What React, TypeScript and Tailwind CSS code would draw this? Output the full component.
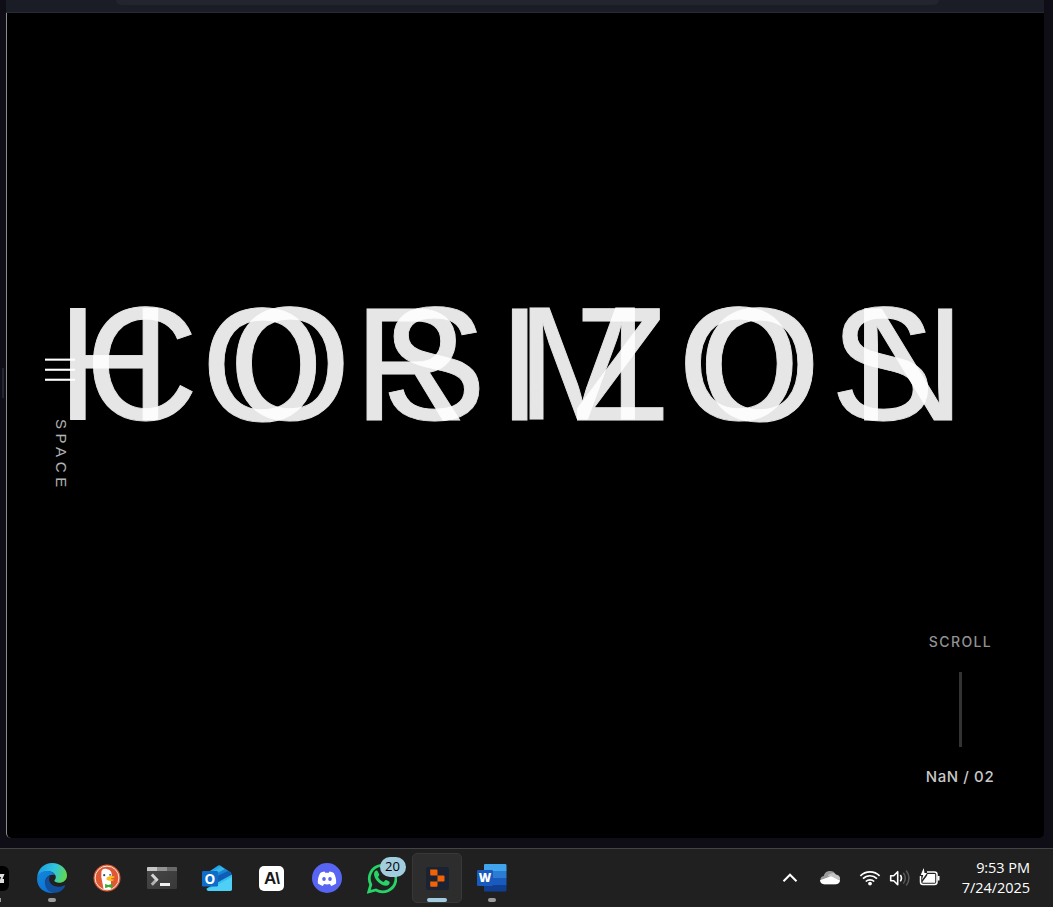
import React from "react";

function Edge() {
  return (
    <svg width="30" height="30" viewBox="0 0 30 30">
      <defs>
        <linearGradient id="eTop" x1="0" y1="0.3" x2="1" y2="0.5">
          <stop offset="0" stopColor="#1b9de2" />
          <stop offset="0.55" stopColor="#2fc4df" />
          <stop offset="1" stopColor="#62d84e" />
        </linearGradient>
        <linearGradient id="eLeft" x1="0" y1="0" x2="0.6" y2="1">
          <stop offset="0" stopColor="#1488dc" />
          <stop offset="1" stopColor="#0c6fd0" />
        </linearGradient>
      </defs>
      <path d="M0.2 14C1 5.5 7.5 0 15 0c8.500 0 15 6 15 12.500 0 4.500-3.500 7.300-8 7.300-2.700 0-4.600-.9-4.600-2.200 0-.8 1.400-1.400 1.400-3.400 0-3.300-3.200-6-8-6C6 8.200 2 10.300.2 14z" fill="url(#eTop)" />
      <path d="M0.100 15.500C.3 10.500 5 8 10.500 8c3.600 0 6.600 1.800 7.800 4.200C13.500 10.500 8.300 13.500 8.300 19c0 5 4 9.500 9.300 10.700C8.500 31.500-.4 25 .1 15.500z" fill="url(#eLeft)" />
      <path d="M13 12.600c-1.500 3-1.200 6.200 1.200 8.500 3.300 3.200 8.700 3.500 12.800 1.300.8-.4 1.300.2.900 1C25.500 27.800 20.800 30.400 16 29.700 10.700 29 7.500 24 8.300 19c.4-3 2-5.400 4.700-6.400z" fill="#114f9c" />
    </svg>
  );
}

function Duck() {
  return (
    <svg width="28" height="28" viewBox="0 0 28 28">
      <circle cx="14" cy="14" r="13.500" fill="#de5833" />
      <circle cx="14" cy="14" r="11.900" fill="none" stroke="#f7e9e4" strokeWidth="1" />
      <path d="M8.400 9C8 5.700 11 4.100 14 5.200c3.800.5 5.100 3.200 4.700 6.800l-.8 3 .2 9.800c-2.600 1-5.300.9-7.600-.1L8.300 13z" fill="#fff" />
      <path d="M14.500 12.900c2.400-1.200 5.700-1 7.400-.2.500.9-3.700 1.500-4.400 2 1.500.8 3.300.6 3.600 1-.8 1.800-6.300 1.500-7.500-.1-.5-1 .1-2.200.9-2.700z" fill="#fbbd16" />
      <path d="M12 20l3.300 1.100 4-1.400.3 4.600-4.100-1.200-3.300 1.200z" fill="#43a832" />
      <circle cx="11.200" cy="11.200" r="1.100" fill="#334b73" />
      <circle cx="17.100" cy="10.800" r=".9" fill="#334b73" />
    </svg>
  );
}

function Terminal() {
  return (
    <svg width="30" height="22" viewBox="0 0 30 22">
      <defs>
        <linearGradient id="term" x1="0" y1="0" x2="1" y2="1">
          <stop offset="0" stopColor="#484848" />
          <stop offset="1" stopColor="#383838" />
        </linearGradient>
      </defs>
      <rect width="30" height="22" rx="1.200" fill="url(#term)" />
      <path d="M1 0h9v4H0V1a1 1 0 011-1z" fill="#c6c6c6" />
      <path d="M10 0h10v4H10z" fill="#929292" />
      <path d="M20 0h9a1 1 0 011 1v3H20z" fill="#686868" />
      <path d="M10.300 12L4.800 17.800" stroke="#b2b2b2" strokeWidth="3" />
      <path d="M4.800 7.500L10.500 13.500" stroke="#d5d5d5" strokeWidth="3" />
      <path d="M13 16h10v3H13z" fill="#f1f1f1" />
    </svg>
  );
}

function Outlook() {
  return (
    <svg width="30" height="27" viewBox="0 0 30 27">
      <path d="M5 8L16.200.6q1-.7 2 0L29 7.800v3L5 20z" fill="#24a7e5" />
      <path d="M8 8l11-6 5 3L6 15z" fill="#38b6ec" />
      <path d="M8 12L23 3.900l5 3.300L9 18z" fill="#1686d3" />
      <path d="M5 16L26 6l3.500 2.200v4L10 22z" fill="#0f5db5" />
      <path d="M30 9.500v14a2.500 2.500 0 01-2.500 2.500H7q-2.500 0-2.500-2.500z" fill="#35bfee" />
      <path d="M12 21.500L30 12v11.500a2.500 2.500 0 01-2.500 2.500H7q-1.500 0-2-2z" fill="#4ecff5" />
      <rect x="0" y="6" width="16" height="15.500" rx="1.300" fill="#0f6cc9" />
      <text x="7.900" y="18.600" textAnchor="middle" fontSize="13.500" fontWeight="700" fontFamily="Open Sans, sans-serif" fill="#fff">O</text>
    </svg>
  );
}

function Discord() {
  return (
    <svg width="30" height="30" viewBox="0 0 30 30">
      <circle cx="15" cy="15" r="15" fill="#5865f2" />
      <path d="M12.500 8.500c-1.700.2-3.200.8-4.300 1.500-1.800 3.300-2.700 6.800-2.300 10.500 1.800 1.300 3.500 2 5 2.400l1.100-1.900c2 .5 4 .5 6 0l1.100 1.900c1.700-.4 3.300-1.200 5-2.400.4-3.600-.4-7.200-2.300-10.500-1.200-.8-2.700-1.300-4.300-1.500l-.7 1.200h-3.600z" fill="#fff" />
      <ellipse cx="12" cy="16" rx="1.800" ry="2" fill="#5865f2" />
      <ellipse cx="18" cy="16" rx="1.800" ry="2" fill="#5865f2" />
    </svg>
  );
}

function WhatsApp() {
  return (
    <svg width="30" height="31" viewBox="0 0 30 31">
      <path d="M1.700 28.900L3.800 21.600A13.300 13.300 0 1 1 8.900 27z" fill="none" stroke="#25d366" strokeWidth="2.800" />
      <path d="M10.800 8.400c-.4-.8-.8-.9-1.300-.9-1 0-2.500 1.200-2.500 3.500 0 5.500 7 11.800 12 11.800 2.300 0 3.900-1.700 3.700-3.600-.1-.7-2.900-2-3.700-2.200-1.100-.2-1.800 2.100-2.500 2.100-1.300-.2-5.200-3.600-5.400-5-.1-.7 1.200-1.500 1.200-2.400z" fill="#25d366" />
    </svg>
  );
}

function Word() {
  return (
    <svg width="30" height="28" viewBox="0 0 30 28">
      <path d="M8 0h20.500q1 0 1 1.500V7H7V1q0-1 1-1z" fill="#41a5ee" />
      <path d="M7 7h22.500v7H7z" fill="#2b7cd3" />
      <path d="M7 14h22.500v7H7z" fill="#185abd" />
      <path d="M7 21h22.500v5q0 1.500-1.500 1.500H8q-1 0-1-1z" fill="#103f91" />
      <rect x="0" y="6" width="16" height="16" rx="1.300" fill="#185abd" />
      <text x="7.900" y="18.200" textAnchor="middle" fontSize="12" fontWeight="800" fontFamily="Open Sans, sans-serif" fill="#fff">W</text>
    </svg>
  );
}

function Tray() {
  return (
    <div className="flex h-[58px] w-[160px] items-center">
      <svg width="160" height="30" viewBox="0 0 160 30" fill="none">
        <path d="M3.500 18.200L10 11.700l6.500 6.500" stroke="#fff" strokeWidth="2" />
        <path d="M44.500 21.300a4.200 4.200 0 01-.8-8.300 6.500 6.500 0 0112-1.600 5 5 0 014.300 5.100q.3 4.800-4.600 4.800z" fill="#9b9b9b" />
        <path d="M51 10.500q3.500-1.500 5 1.300 4.300.5 4 5l-9-2.300-3.300-1.700q1-1.600 3.300-2.300z" fill="#c4c4c4" />
        <path d="M44 21.300q-3.700-.6-4-4l11-4 9 4.300q-.9 3.700-4.600 3.700z" fill="#fff" />
        <g stroke="#fff" strokeWidth="1.700">
          <path d="M80.400 12.800a13.500 13.500 0 0119.200 0" />
          <path d="M83 15.600a10 10 0 0114 0" />
          <path d="M85.800 18.500a6 6 0 018.400 0" />
        </g>
        <circle cx="90" cy="20.600" r="1.900" fill="#fff" />
        <path d="M110.700 12.700h3l4-4v13l-4-4h-3z" stroke="#fff" strokeWidth="1.600" strokeLinejoin="round" />
        <path d="M120.300 12q2.300 3.200 0 6.400" stroke="#fff" strokeWidth="1.600" />
        <path d="M123.300 9.800q4 5.400 0 10.800M126.200 7.500q5.600 7.700 0 15" stroke="#595959" strokeWidth="1.500" />
        <path d="M147 9h7.500q2.500 0 2.500 2.500v7.500q0 2.500-2.500 2.500H143q-2.500 0-2.500-2.500v-6" stroke="#fff" strokeWidth="1.500" />
        <path d="M157.500 13h2v4.500h-2z" fill="#fff" />
        <path d="M147.500 11h7.700v8.700H142.500v-1l4.500-6z" fill="#fff" />
        <path d="M143.700 5l-3 7h2.500l-1.200 5 5-7h-2.500z" fill="#fff" />
      </svg>
    </div>
  );
}

function TaskItem({ children, mark }: { children?: React.ReactNode; mark?: boolean }) {
  return (
    <div className="flex h-[58px] w-[55px] shrink-0 flex-col items-center">
      <div className="flex h-[49px] items-center justify-center pt-[9px]">{children}</div>
      <div className={mark ? "mt-0 h-1 w-2 rounded-full bg-[#9b9b9b]" : "h-1"} />
    </div>
  );
}

export default function App() {
  return (
    <div className="flex h-[907px] w-[1053px] flex-col overflow-hidden bg-[#0f0e17] font-['Liberation_Sans',sans-serif]">
      <div className="flex h-[848px]">
        <div className="flex h-[848px] w-[6px] items-start pt-[368px] pl-[2px]">
          <div className="h-[30px] w-[2px] bg-[#222530]" />
        </div>
        <div className="flex w-[1038px] flex-col">
          <div className="flex h-[13px] shrink-0 border-b border-[#282b34] bg-[#1a1d25] pl-[110px]">
            <div className="h-[5px] w-[823px] rounded-b-[5px] bg-[#22252e]" />
          </div>
          <main className="relative h-[825px] overflow-hidden rounded-b-[5px] border-l border-[#8c8c8c] bg-black">
            <h1 className="absolute top-[263px] left-[50.800px] origin-[50%_141px] scale-y-[1.035] text-[156px] leading-[180px] tracking-[0.2em] whitespace-nowrap text-white opacity-90 [-webkit-text-stroke:0.900px_white]">
              HORIZON
            </h1>
            <h1 className="absolute top-[262px] left-[78.500px] origin-[50%_141px] scale-y-[1.035] text-[156px] leading-[180px] tracking-[0.2em] whitespace-nowrap text-white opacity-90 [-webkit-text-stroke:0.900px_white]">
              COSMOS
            </h1>
            <nav className="absolute top-[345px] left-[38px] flex flex-col items-start">
              <svg width="30" height="24" viewBox="0 0 30 24" fill="#fff">
                <rect y=".6" width="30" height="2.100" />
                <rect y="10.700" width="30" height="2.100" />
                <rect y="20.700" width="30" height="2.100" />
              </svg>
              <div className="mt-[37px] ml-[5px] text-[15px] leading-[22px] tracking-[4.600px] text-white opacity-70 [writing-mode:vertical-rl]">
                SPACE
              </div>
            </nav>
            <div className="absolute top-[621px] left-[913px] flex w-[80px] flex-col items-center font-[Inter,sans-serif]">
              <div className="ml-[1px] text-[14px] leading-[16px] font-medium tracking-[1.400px] text-[#929292]">SCROLL</div>
              <div className="mt-[22px] h-[75px] w-[3px] bg-[#333333]" />
              <div className="mt-[21px] text-[15px] leading-[18px] font-medium tracking-[0.600px] whitespace-nowrap text-[#c8c8c8]">NaN / 02</div>
            </div>
          </main>
        </div>
      </div>
      <footer className="flex h-[59px] justify-between border-t border-[#444444] bg-[#202020]">
        <div className="flex">
          <div className="flex w-[24px] flex-col items-start overflow-hidden pt-[17px]">
            <div className="flex h-[25px] w-[9px] items-center rounded-r-[6px] bg-black">
              <svg width="6" height="14" viewBox="0 0 6 14"><path d="M0 2h4.500L2.500 7h1.500v4L0 11V8l1-3H0z" fill="#ddd" /></svg>
            </div>
            <div className="mt-[7px] h-1 w-[1px] bg-[#999999]" />
          </div>
          <TaskItem mark><Edge /></TaskItem>
          <TaskItem><Duck /></TaskItem>
          <TaskItem><Terminal /></TaskItem>
          <TaskItem><Outlook /></TaskItem>
          <TaskItem>
            <div className="flex h-[25px] w-[25px] items-center justify-center rounded-[5px] bg-white text-[17px] leading-[25px] font-bold tracking-[-1px] text-[#191919]">
              <span>A</span><span>\</span>
            </div>
          </TaskItem>
          <TaskItem><Discord /></TaskItem>
          <TaskItem>
            <div className="relative h-[31px] w-[30px]">
              <WhatsApp />
              <div className="absolute top-[-6px] left-[13px] flex h-[20px] w-[26px] items-center justify-center rounded-full bg-[#a2cddf] font-['Open_Sans',sans-serif] text-[13px] text-black">20</div>
            </div>
          </TaskItem>
          <div className="mt-[4px] ml-[3px] flex h-[50px] w-[50px] flex-col items-center rounded-[5px] border border-[#383838] bg-[#2d2d2d]">
            <svg className="mt-[13px]" width="23" height="23" viewBox="0 0 23 23">
              <rect width="23" height="23" rx="2" fill="#1b2333" />
              <path d="M4.200 2.500h6.300q1 0 1 1v5h-6.300q-1 0-1-1zM11.500 8.500h6q1 0 1 1v4q0 1-1 1h-6zM4.200 14.500h7.300v4q0 1.200-1 1.200H5.200q-1 0-1-1z" fill="#f26207" />
            </svg>
            <div className="mt-[8px] h-1 w-5 rounded-full bg-[#a2cddf]" />
          </div>
          <div className="ml-[2px]"><TaskItem mark><Word /></TaskItem></div>
        </div>
        <div className="flex pr-[23px]">
          <Tray />
          <div className="ml-[10px] flex w-[80px] flex-col items-end pt-[9px] font-['Open_Sans',sans-serif] text-[14.500px] leading-5 tracking-[-0.050px] text-white">
            <span>9:53 PM</span>
            <span>7/24/2025</span>
          </div>
        </div>
      </footer>
    </div>
  );
}
